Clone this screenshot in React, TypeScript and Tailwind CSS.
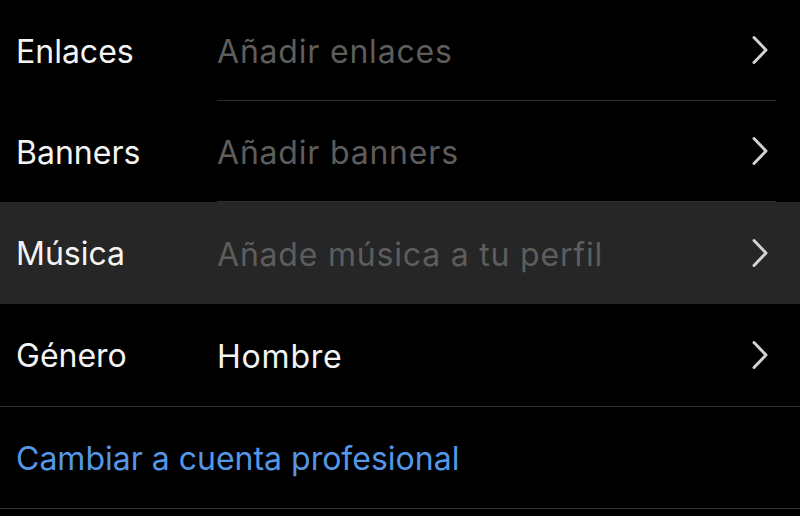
import React from "react";

const Chevron = () => (
  <svg width="18" height="32" viewBox="0 0 18 32" fill="none" className="shrink-0">
    <path d="M3 3.5 L15 16 L3 28.5" stroke="#d2d2d2" strokeWidth="3" strokeLinecap="round" strokeLinejoin="round" />
  </svg>
);

type RowProps = { label: string; value: string; placeholder?: boolean; h: string; bg?: string; border?: string; fullBorder?: boolean };

const Row = ({ label, value, placeholder, h, bg, border, fullBorder }: RowProps) => (
  <div className={`flex ${h} ${bg ?? ""} ${fullBorder ? "border-b border-[#363636]" : ""}`}>
    <div className="w-[217px] shrink-0 pl-[16px] pt-[2px] flex items-center text-[#f4f4f4]">{label}</div>
    <div className={`flex-1 mr-[24px] flex items-center justify-between ${border ?? ""}`}>
      <span className={`pt-[3px] tracking-[0.8px] ${placeholder ? "text-[#5d5d5d]" : "text-[#f4f4f4]"}`}>{value}</span>
      <div className="mr-[7px]">
        <Chevron />
      </div>
    </div>
  </div>
);

export default function App() {
  return (
    <div
      className="w-[800px] h-[516px] bg-black overflow-hidden text-[32px] leading-none"
      style={{ fontFamily: "Inter, 'Noto Sans', sans-serif" }}
    >
      <Row label="Enlaces" value="Añadir enlaces" placeholder h="h-[101px]" border="border-b border-[#2e2e2e]" />
      <Row label="Banners" value="Añadir banners" placeholder h="h-[101px]" border="border-b border-[#2e2e2e]" />
      <Row label="Música" value="Añade música a tu perfil" placeholder h="h-[102px]" bg="bg-[#262626]" />
      <Row label="Género" value="Hombre" h="h-[103px]" fullBorder />
      <div className="h-[102px] flex items-center pl-[16px] pt-[2px] border-b border-[#363636] text-[#5497e6]">
        Cambiar a cuenta profesional
      </div>
    </div>
  );
}
